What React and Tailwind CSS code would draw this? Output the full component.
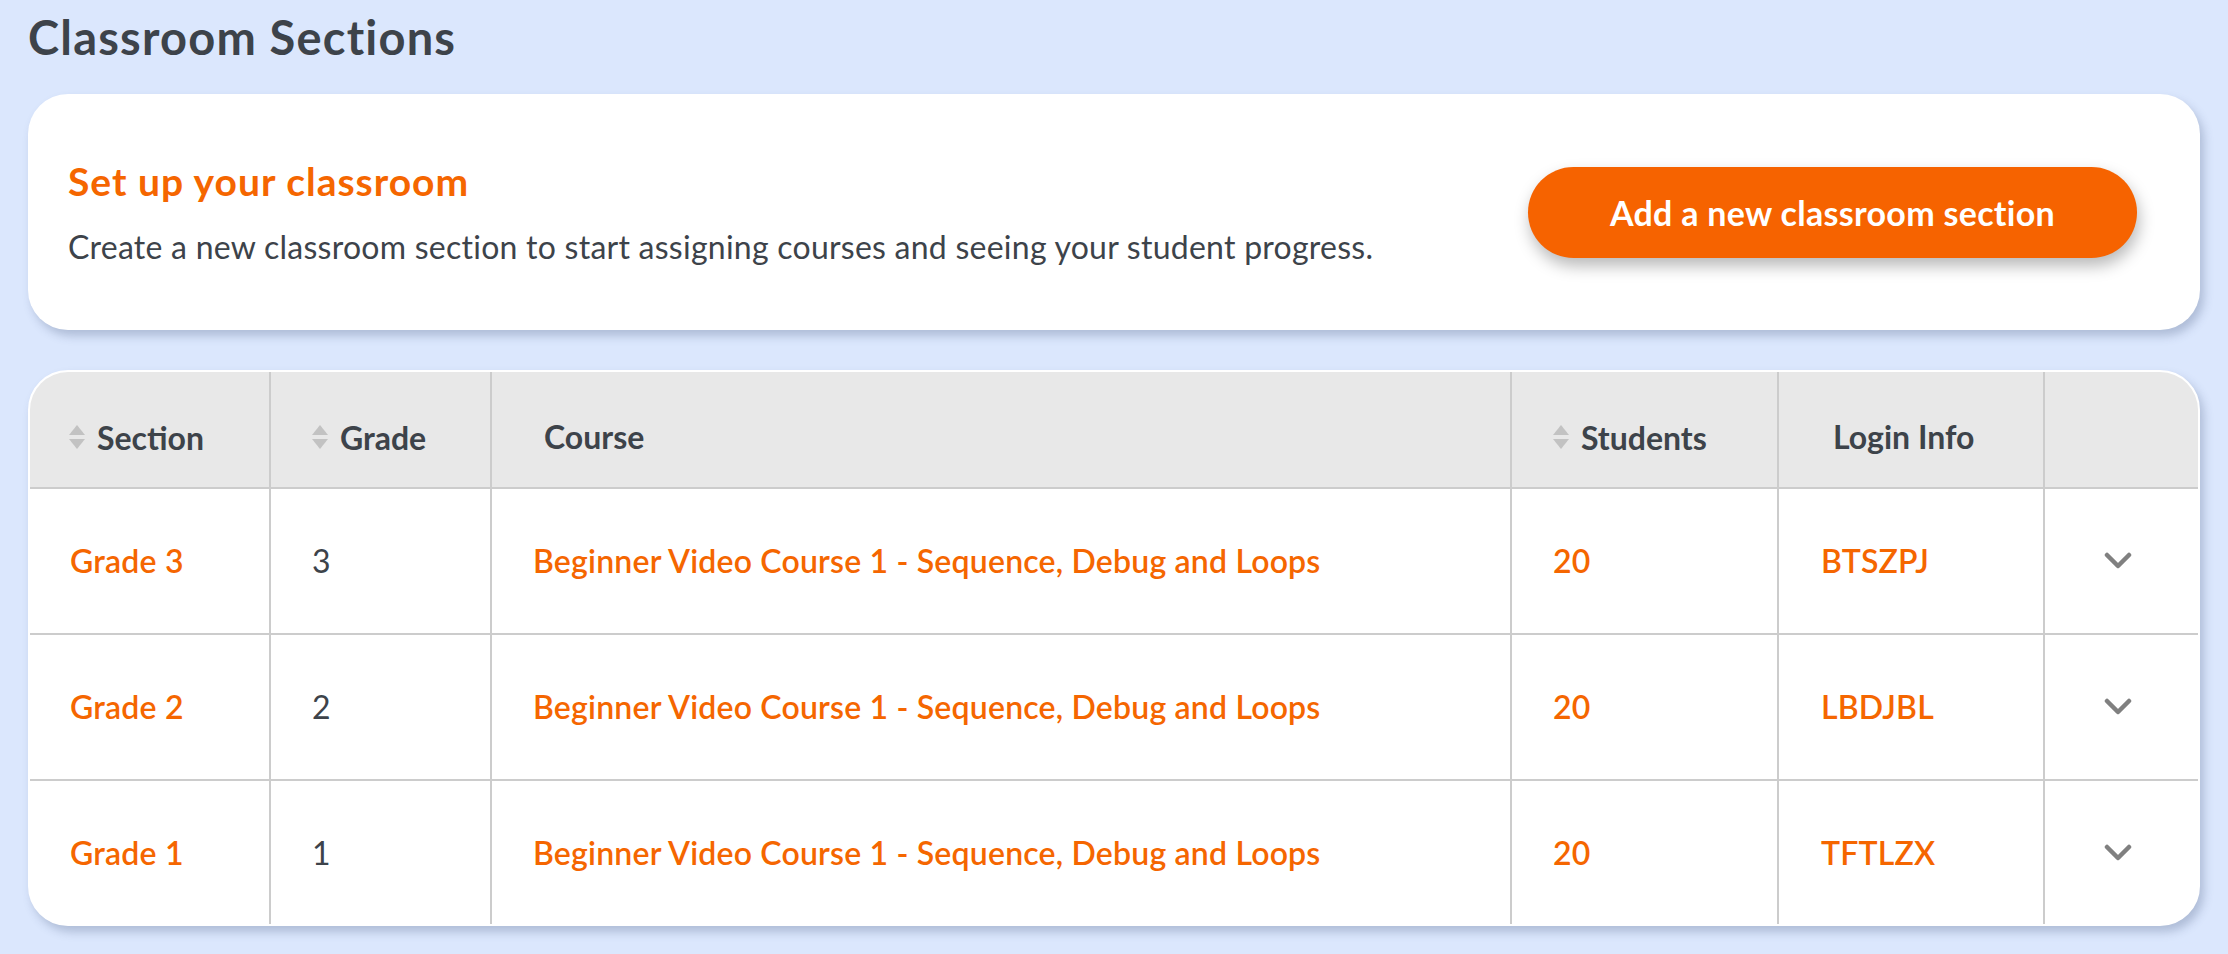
import React from "react";

const rows = [
  { section: "Grade 3", grade: "3", code: "BTSZPJ" },
  { section: "Grade 2", grade: "2", code: "LBDJBL" },
  { section: "Grade 1", grade: "1", code: "TFTLZX" },
];

const SortIcon = () => (
  <svg width="18" height="26" viewBox="0 0 18 26" className="shrink-0 mr-[11px] -mt-[2px]">
    <path d="M9 1 L17 11 L1 11 Z" fill="#c2c2c2" />
    <path d="M1 15 L17 15 L9 25 Z" fill="#c2c2c2" />
  </svg>
);

const Chevron = () => (
  <svg width="28" height="18" viewBox="0 0 28 18">
    <polyline
      points="3,3 14,14 25,3"
      fill="none"
      stroke="#808080"
      strokeWidth="4.5"
      strokeLinecap="round"
      strokeLinejoin="round"
    />
  </svg>
);

const cols = "grid grid-cols-[241px_221px_1020px_267px_266px_153px]";

export default function App() {
  return (
    <div
      className="min-h-screen bg-[#dbe7fd] px-[28px] pt-[13px] text-[#3d434a]"
      style={{ fontFamily: "Lato, 'Open Sans', sans-serif" }}
    >
      <h1 className="text-[47px] leading-[48px] font-bold tracking-[1.2px] mb-[33px]">Classroom Sections</h1>

      {/* set up card */}
      <div className="h-[236px] bg-white rounded-[40px] shadow-[4px_6px_10px_rgba(60,80,120,0.28)] flex items-center justify-between pl-[40px] pr-[63px]">
        <div className="flex flex-col gap-[26px] pt-[4px]">
          <h2 className="text-[39px] leading-[40px] font-bold tracking-[1px] text-[#f56600]">Set up your classroom</h2>
          <p className="text-[32px] leading-[40px] tracking-[0.25px]">
            Create a new classroom section to start assigning courses and seeing your student progress.
          </p>
        </div>
        <button className="w-[609px] h-[91px] rounded-full bg-[#f66300] text-white text-[34px] tracking-[0.3px] font-bold shadow-[2px_8px_16px_rgba(0,0,0,0.28)]">
          Add a new classroom section
        </button>
      </div>

      {/* table */}
      <div className="mt-[40px] bg-white border-2 border-white rounded-[40px] overflow-hidden shadow-[4px_6px_10px_rgba(60,80,120,0.28)]">
        <div className={`${cols} h-[117px] bg-[#e8e8e8] border-b-2 border-[#cccccc] text-[32px] font-bold`}>
          <div className="flex items-center pl-[38px] pt-[16px] border-r-2 border-[#cccccc]">
            <SortIcon />
            Section
          </div>
          <div className="flex items-center pl-[40px] pt-[16px] border-r-2 border-[#cccccc]">
            <SortIcon />
            Grade
          </div>
          <div className="flex items-center pl-[52px] pt-[14px] border-r-2 border-[#cccccc]">Course</div>
          <div className="flex items-center pl-[40px] pt-[16px] border-r-2 border-[#cccccc]">
            <SortIcon />
            Students
          </div>
          <div className="flex items-center pl-[54px] pt-[14px] border-r-2 border-[#cccccc]">Login Info</div>
          <div></div>
        </div>
        {rows.map((r, i) => (
          <div
            key={r.code}
            className={`${cols} ${i < 2 ? "h-[146px] border-b-2 border-[#cccccc]" : "h-[143px]"} text-[32px] tracking-[0.2px] font-semibold text-[#f56600]`}
          >
            <div className="flex items-center pl-[40px] border-r-2 border-[#cccccc]">{r.section}</div>
            <div className="flex items-center pl-[41px] border-r-2 border-[#cccccc] font-normal text-[#3d434a]">
              {r.grade}
            </div>
            <div className="flex items-center pl-[41px] border-r-2 border-[#cccccc]">
              Beginner Video Course 1 - Sequence, Debug and Loops
            </div>
            <div className="flex items-center pl-[41px] border-r-2 border-[#cccccc]">20</div>
            <div className="flex items-center pl-[42px] border-r-2 border-[#cccccc]">{r.code}</div>
            <div className="flex items-center justify-center pr-[8px]">
              <Chevron />
            </div>
          </div>
        ))}
      </div>
    </div>
  );
}
